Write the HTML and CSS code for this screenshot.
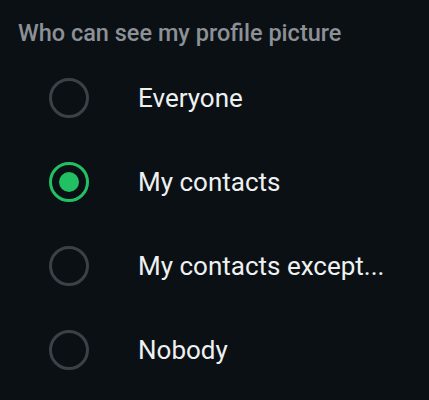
FILE: index.html
```html
<!DOCTYPE html>
<html lang="en">
<head>
    <meta charset="UTF-8">
    <meta name="viewport" content="width=device-width, initial-scale=1.0">
    <title>Profile picture</title>
    <link rel="stylesheet" href="styles.css">
</head>
<body>
    <!-- privacy options -->
    <div class="privacy">
        <h2 class="privacy-title">Who can see my profile picture</h2>
        <ul class="options">
            <li class="option">
                <span class="radio"></span>
                <span class="label">Everyone</span>
            </li>
            <li class="option">
                <span class="radio checked"></span>
                <span class="label">My contacts</span>
            </li>
            <li class="option">
                <span class="radio"></span>
                <span class="label">My contacts except...</span>
            </li>
            <li class="option">
                <span class="radio"></span>
                <span class="label">Nobody</span>
            </li>
        </ul>
    </div>
</body>
</html>
```

FILE: styles.css
```css
/* page */
body {
    margin: 0;
    background: #0b1014;
    font-family: Roboto, "Noto Sans", sans-serif;
    color: #e9edef;
}

.privacy {
    padding: 18px 0 0 18px;
}

.privacy-title {
    margin: 0;
    font-size: 23.5px;
    font-weight: 500;
    line-height: 30px;
    color: #8b9197;
}

/* radio list */
.options {
    list-style: none;
    margin: 8px 0 0;
    padding: 0;
}

.option {
    display: flex;
    align-items: center;
    height: 84px;
    padding-left: 31px;
}

.radio {
    box-sizing: border-box;
    width: 40px;
    height: 40px;
    border: 3px solid #3b4148;
    border-radius: 50%;
    display: flex;
    align-items: center;
    justify-content: center;
}

.radio.checked {
    border-color: #21c063;
}

.radio.checked::after {
    content: "";
    width: 20px;
    height: 20px;
    border-radius: 50%;
    background: #21c063;
}

.label {
    margin-left: 49px;
    font-size: 26px;
    color: #eef1f2;
}
```
